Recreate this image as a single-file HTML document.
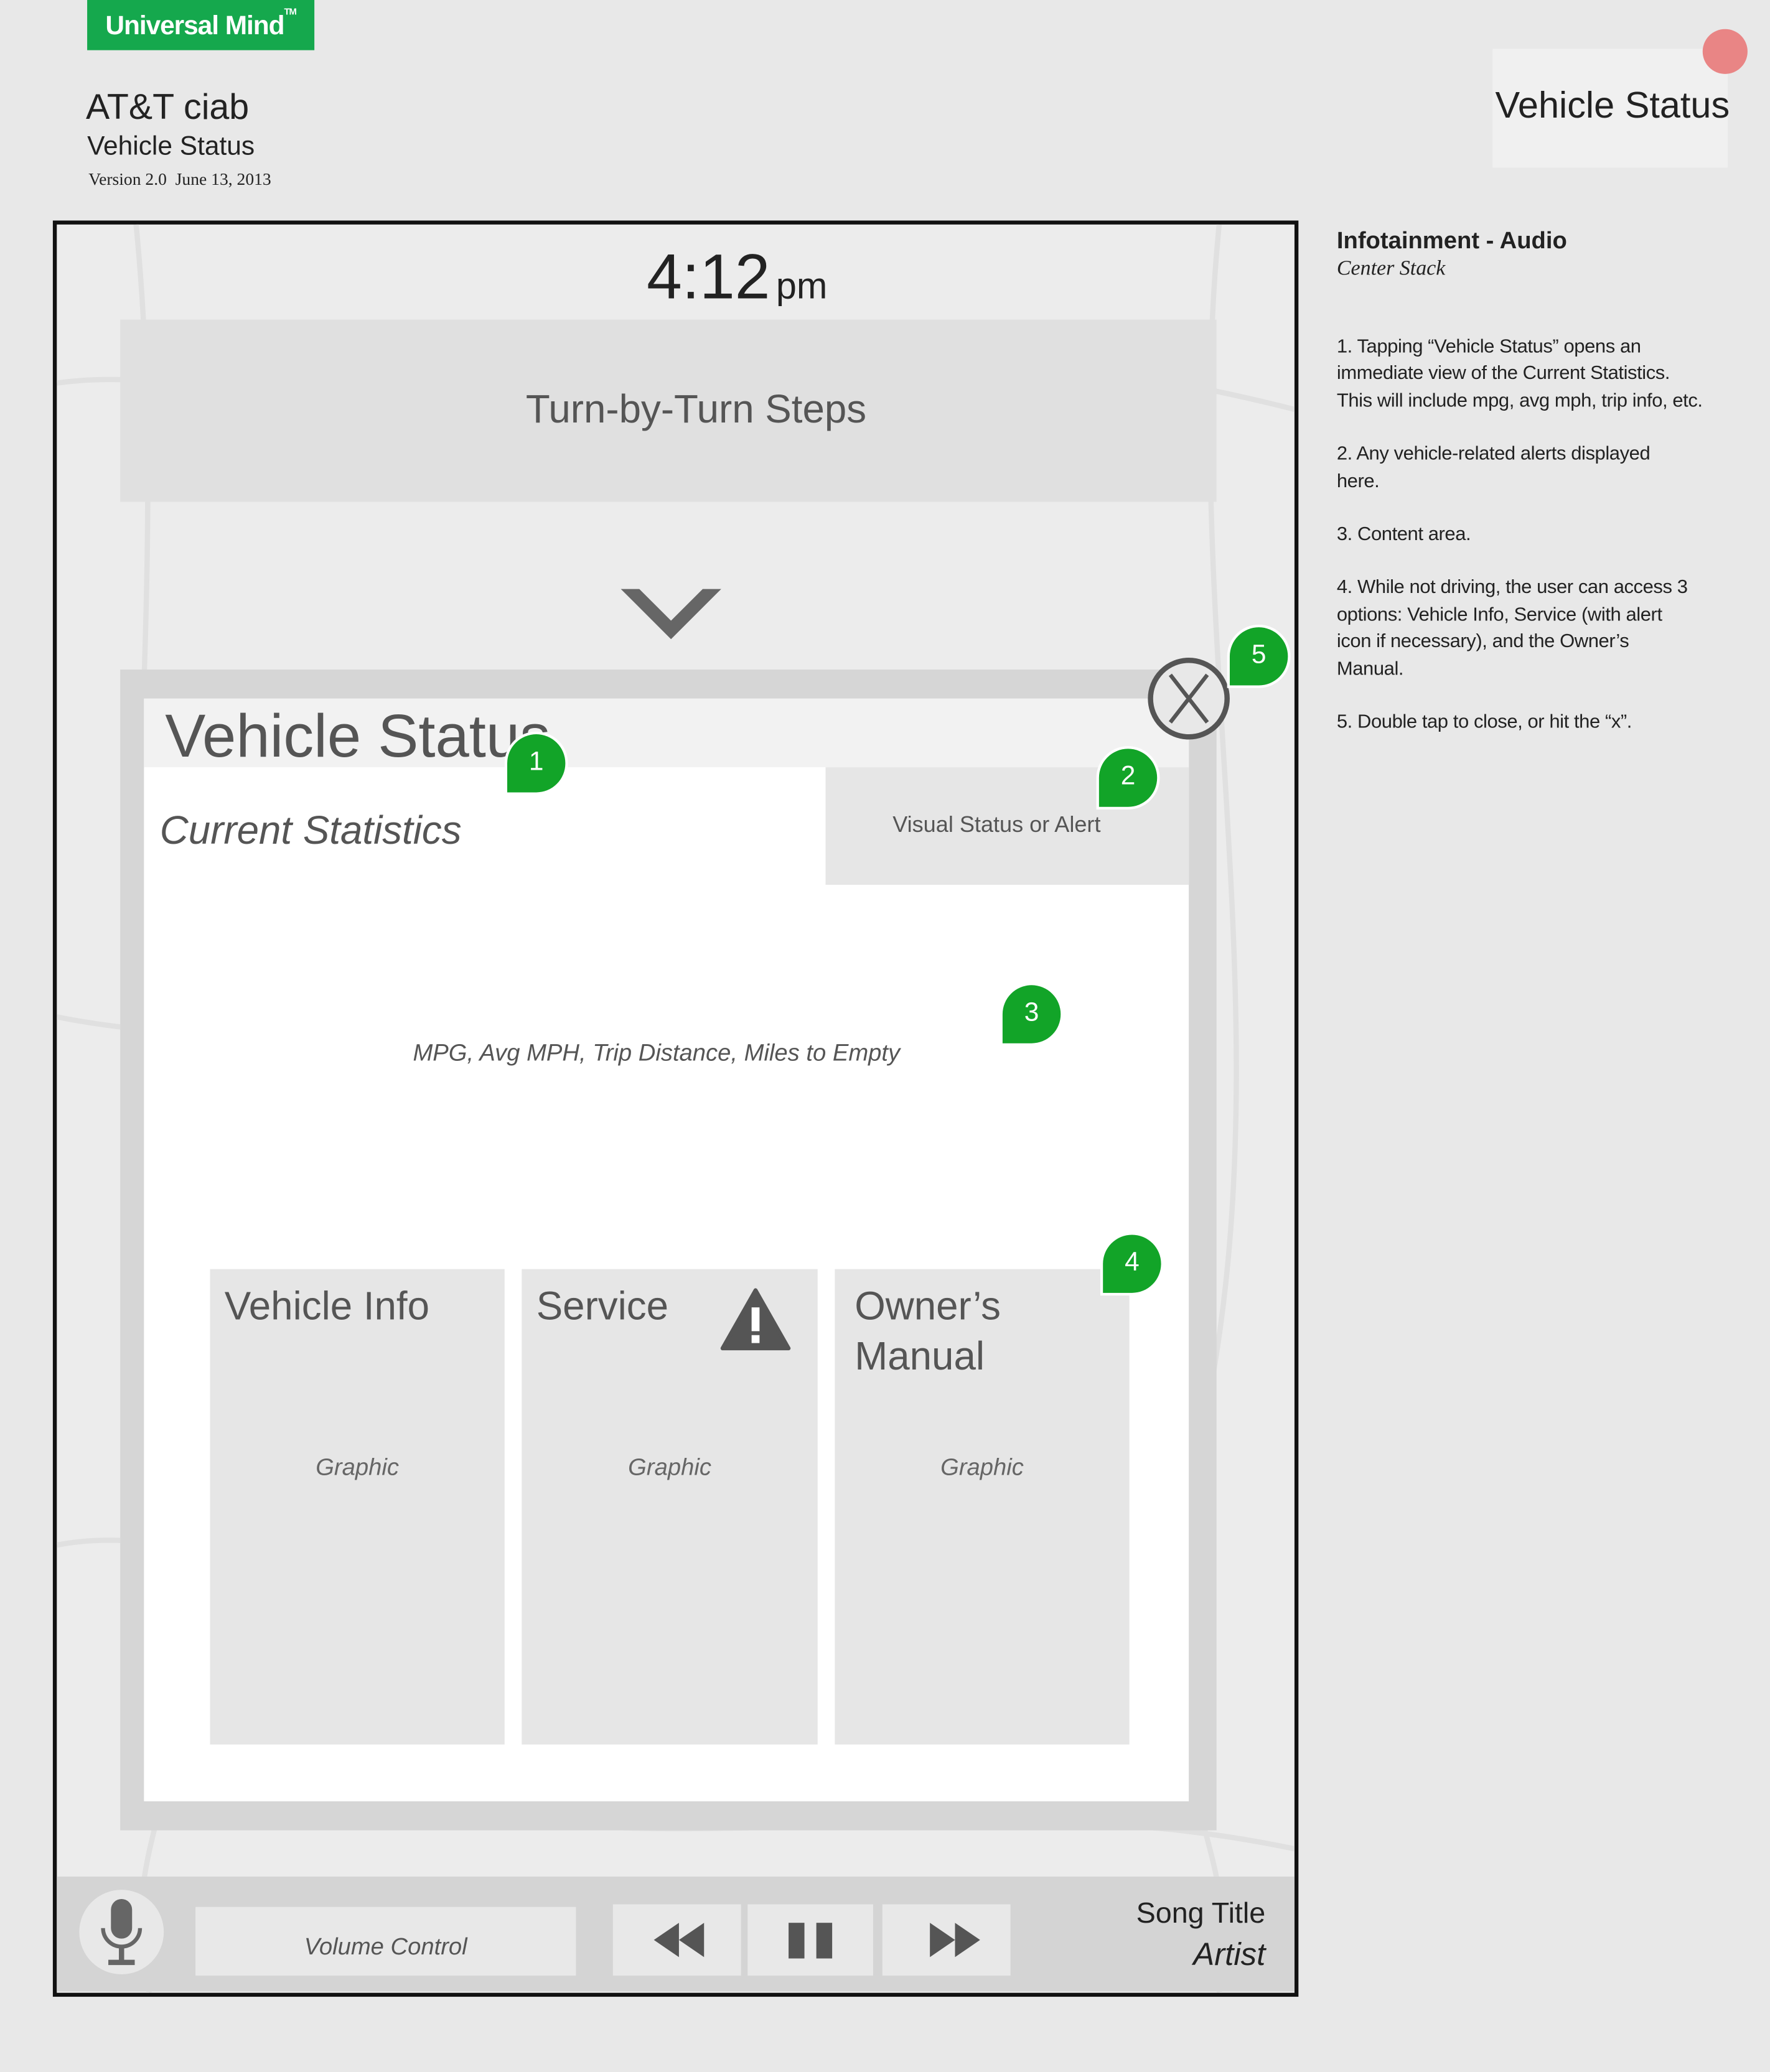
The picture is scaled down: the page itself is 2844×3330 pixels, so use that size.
<!DOCTYPE html>
<html><head><meta charset="utf-8"><style>
html,body{margin:0;padding:0;background:#e8e8e8;width:2844px;height:3329px;overflow:hidden}
#w{position:absolute;left:0;top:0;width:1340px;height:1569px;transform:scale(2.1224);transform-origin:0 0;font-family:"Liberation Sans",sans-serif;color:#222}
.a{position:absolute}
.badge{position:absolute;width:44px;height:44px;background:#12a428;color:#fff;border-radius:22px 22px 22px 0;font-size:20px;text-align:center;line-height:42px;box-shadow:0 0 0 2px #fff}
.card{position:absolute;top:961px;height:360px;background:#e6e6e6;width:223px}
.card .t{position:absolute;left:11px;top:10px;font-size:30px;color:#555;line-height:38px}
.card .g{position:absolute;left:0;right:0;top:140px;text-align:center;font-style:italic;font-size:18px;color:#666}
.btn{position:absolute;top:1442px;height:54px;background:#e8e8e8}
.n{font-size:14.6px;line-height:20.4px;margin:0 0 20px 0;letter-spacing:-0.2px}
</style></head><body><div id="w">
<div class="a" style="left:66px;top:0;width:172px;height:38px;background:#15a84d;color:#fff;font-weight:bold;font-size:20px;line-height:40px;text-align:center;letter-spacing:-0.5px">Universal Mind<span style="font-size:7px;vertical-align:top;line-height:20px">TM</span></div>
<div class="a" style="left:65px;top:66px;font-size:27px">AT&amp;T ciab</div>
<div class="a" style="left:66px;top:100px;font-size:20px">Vehicle Status</div>
<div class="a" style="left:67px;top:128px;font-size:13px;font-family:'Liberation Serif',serif">Version 2.0&nbsp; June 13, 2013</div>
<div class="a" style="left:1130px;top:37px;width:178px;height:90px;background:#f0f0f0"></div>
<div class="a" style="left:1132px;top:64px;font-size:28px;color:#222">Vehicle Status</div>
<div class="a" style="left:1289px;top:22px;width:34px;height:34px;border-radius:50%;background:#e98585"></div>

<div class="a" style="left:40px;top:167px;width:937px;height:1339px;border:3px solid #111;background:#ececec;overflow:hidden">
<svg class="a" style="left:0;top:0" width="937" height="1339" fill="none" stroke="#e0e0e0" stroke-width="4">
<path d="M0 120 C150 100 250 200 400 150 S700 80 937 140"/><path d="M60 0 C90 300 30 600 80 900 S40 1200 70 1339"/><path d="M880 0 C850 300 930 600 870 900 S900 1200 880 1339"/><path d="M0 600 C200 640 300 560 500 620"/><path d="M300 1200 C500 1240 700 1180 937 1230"/><path d="M0 1000 C100 980 200 1050 300 1000"/>
</svg>
</div>
<div class="a" style="left:0;width:1116px;top:183px;text-align:center;color:#222"><span style="font-size:48px">4:12</span> <span style="font-size:28px">pm</span></div>
<div class="a" style="left:91px;top:242px;width:830px;height:138px;background:#e0e0e0;text-align:center;line-height:138px;font-size:30px;color:#555;box-sizing:border-box;padding-left:42px">Turn-by-Turn Steps</div>
<svg class="a" style="left:468px;top:444px" width="80" height="42"><path d="M2 2 L40 40 L78 2 L64 2 L40 26 L16 2Z" fill="#666"/></svg>

<div class="a" style="left:91px;top:507px;width:830px;height:879px;background:#d6d6d6"></div>
<div class="a" style="left:109px;top:529px;width:791px;height:835px;background:#fff"></div>
<div class="a" style="left:109px;top:529px;width:791px;height:52px;background:#f2f2f2"></div>
<div class="a" style="left:125px;top:529px;font-size:46px;color:#555;line-height:56px">Vehicle Status</div>
<div class="a" style="left:121px;top:613px;font-size:30px;color:#555;font-style:italic">Current Statistics</div>
<div class="a" style="left:625px;top:581px;width:275px;height:89px;background:#e6e6e6;text-align:center;line-height:88px;font-size:17px;color:#555;box-sizing:border-box;padding-right:16px">Visual Status or Alert</div>
<div class="a" style="left:109px;width:776px;top:787px;text-align:center;font-size:18px;font-style:italic;color:#555">MPG, Avg MPH, Trip Distance, Miles to Empty</div>
<div class="card" style="left:159px"><div class="t">Vehicle Info</div><div class="g">Graphic</div></div>
<div class="card" style="left:395px;width:224px"><div class="t">Service</div><div class="g">Graphic</div>
<svg class="a" style="left:150px;top:14px" width="54" height="50"><path d="M27 2 L52 46 L2 46Z" fill="#555" stroke="#555" stroke-width="3" stroke-linejoin="round"/><rect x="24" y="15" width="6" height="18" fill="#fff"/><rect x="24" y="36" width="6" height="6" fill="#fff"/></svg></div>
<div class="card" style="left:632px"><div class="t" style="left:15px">Owner’s<br>Manual</div><div class="g">Graphic</div></div>

<svg class="a" style="left:868px;top:497px" width="64" height="64"><circle cx="32" cy="32" r="29" fill="#e8e8e8" stroke="#555" stroke-width="4"/><path d="M18 14 L46 50 M46 14 L18 50" stroke="#555" stroke-width="3"/></svg>
<div class="badge" style="left:384px;top:556px">1</div>
<div class="badge" style="left:832px;top:567px">2</div>
<div class="badge" style="left:759px;top:746px">3</div>
<div class="badge" style="left:835px;top:935px">4</div>
<div class="badge" style="left:931px;top:475px">5</div>

<div class="a" style="left:43px;top:1421px;width:937px;height:87px;background:#d4d4d4"></div>
<div class="a" style="left:60px;top:1431px;width:64px;height:64px;border-radius:50%;background:#e8e8e8"></div>
<svg class="a" style="left:72px;top:1436px" width="40" height="54"><rect x="12" y="2" width="16" height="30" rx="8" fill="#666"/><path d="M6 24 a14 14 0 0 0 28 0" stroke="#666" stroke-width="3" fill="none"/><path d="M20 38 V48 M10 50 H30" stroke="#666" stroke-width="4"/></svg>
<div class="a" style="left:148px;top:1444px;width:288px;height:52px;background:#e8e8e8;text-align:center;line-height:60px;font-size:18px;font-style:italic;color:#555">Volume Control</div>
<div class="btn" style="left:464px;width:97px"><svg width="97" height="54"><path d="M31 27 L50 14 V40Z M50 27 L69 14 V40Z" fill="#555"/></svg></div>
<div class="btn" style="left:566px;width:95px"><svg width="95" height="54"><rect x="31" y="14" width="12" height="27" fill="#555"/><rect x="52" y="14" width="12" height="27" fill="#555"/></svg></div>
<div class="btn" style="left:668px;width:97px"><svg width="97" height="54"><path d="M36 14 L55 27 L36 40Z M55 14 L74 27 L55 40Z" fill="#555"/></svg></div>
<div class="a" style="right:382px;top:1436px;font-size:22px;color:#222">Song Title</div>
<div class="a" style="right:382px;top:1467px;font-size:24px;font-style:italic;color:#222">Artist</div>

<div class="a" style="left:1012px;top:172px;font-size:18px;font-weight:bold">Infotainment - Audio</div>
<div class="a" style="left:1012px;top:195px;font-size:16px;font-style:italic;font-family:'Liberation Serif',serif">Center Stack</div>
<div class="a" style="left:1012px;top:253px;width:292px;color:#222">
<p class="n">1. Tapping “Vehicle Status” opens an immediate view of the Current Statistics.<br>This will include mpg, avg mph, trip info, etc.</p>
<p class="n">2. Any vehicle-related alerts displayed<br>here.</p>
<p class="n">3. Content area.</p>
<p class="n">4. While not driving, the user can access 3 options: Vehicle Info, Service (with alert<br>icon if necessary), and the Owner’s<br>Manual.</p>
<p class="n">5. Double tap to close, or hit the “x”.</p>
</div>
</div></body></html>
